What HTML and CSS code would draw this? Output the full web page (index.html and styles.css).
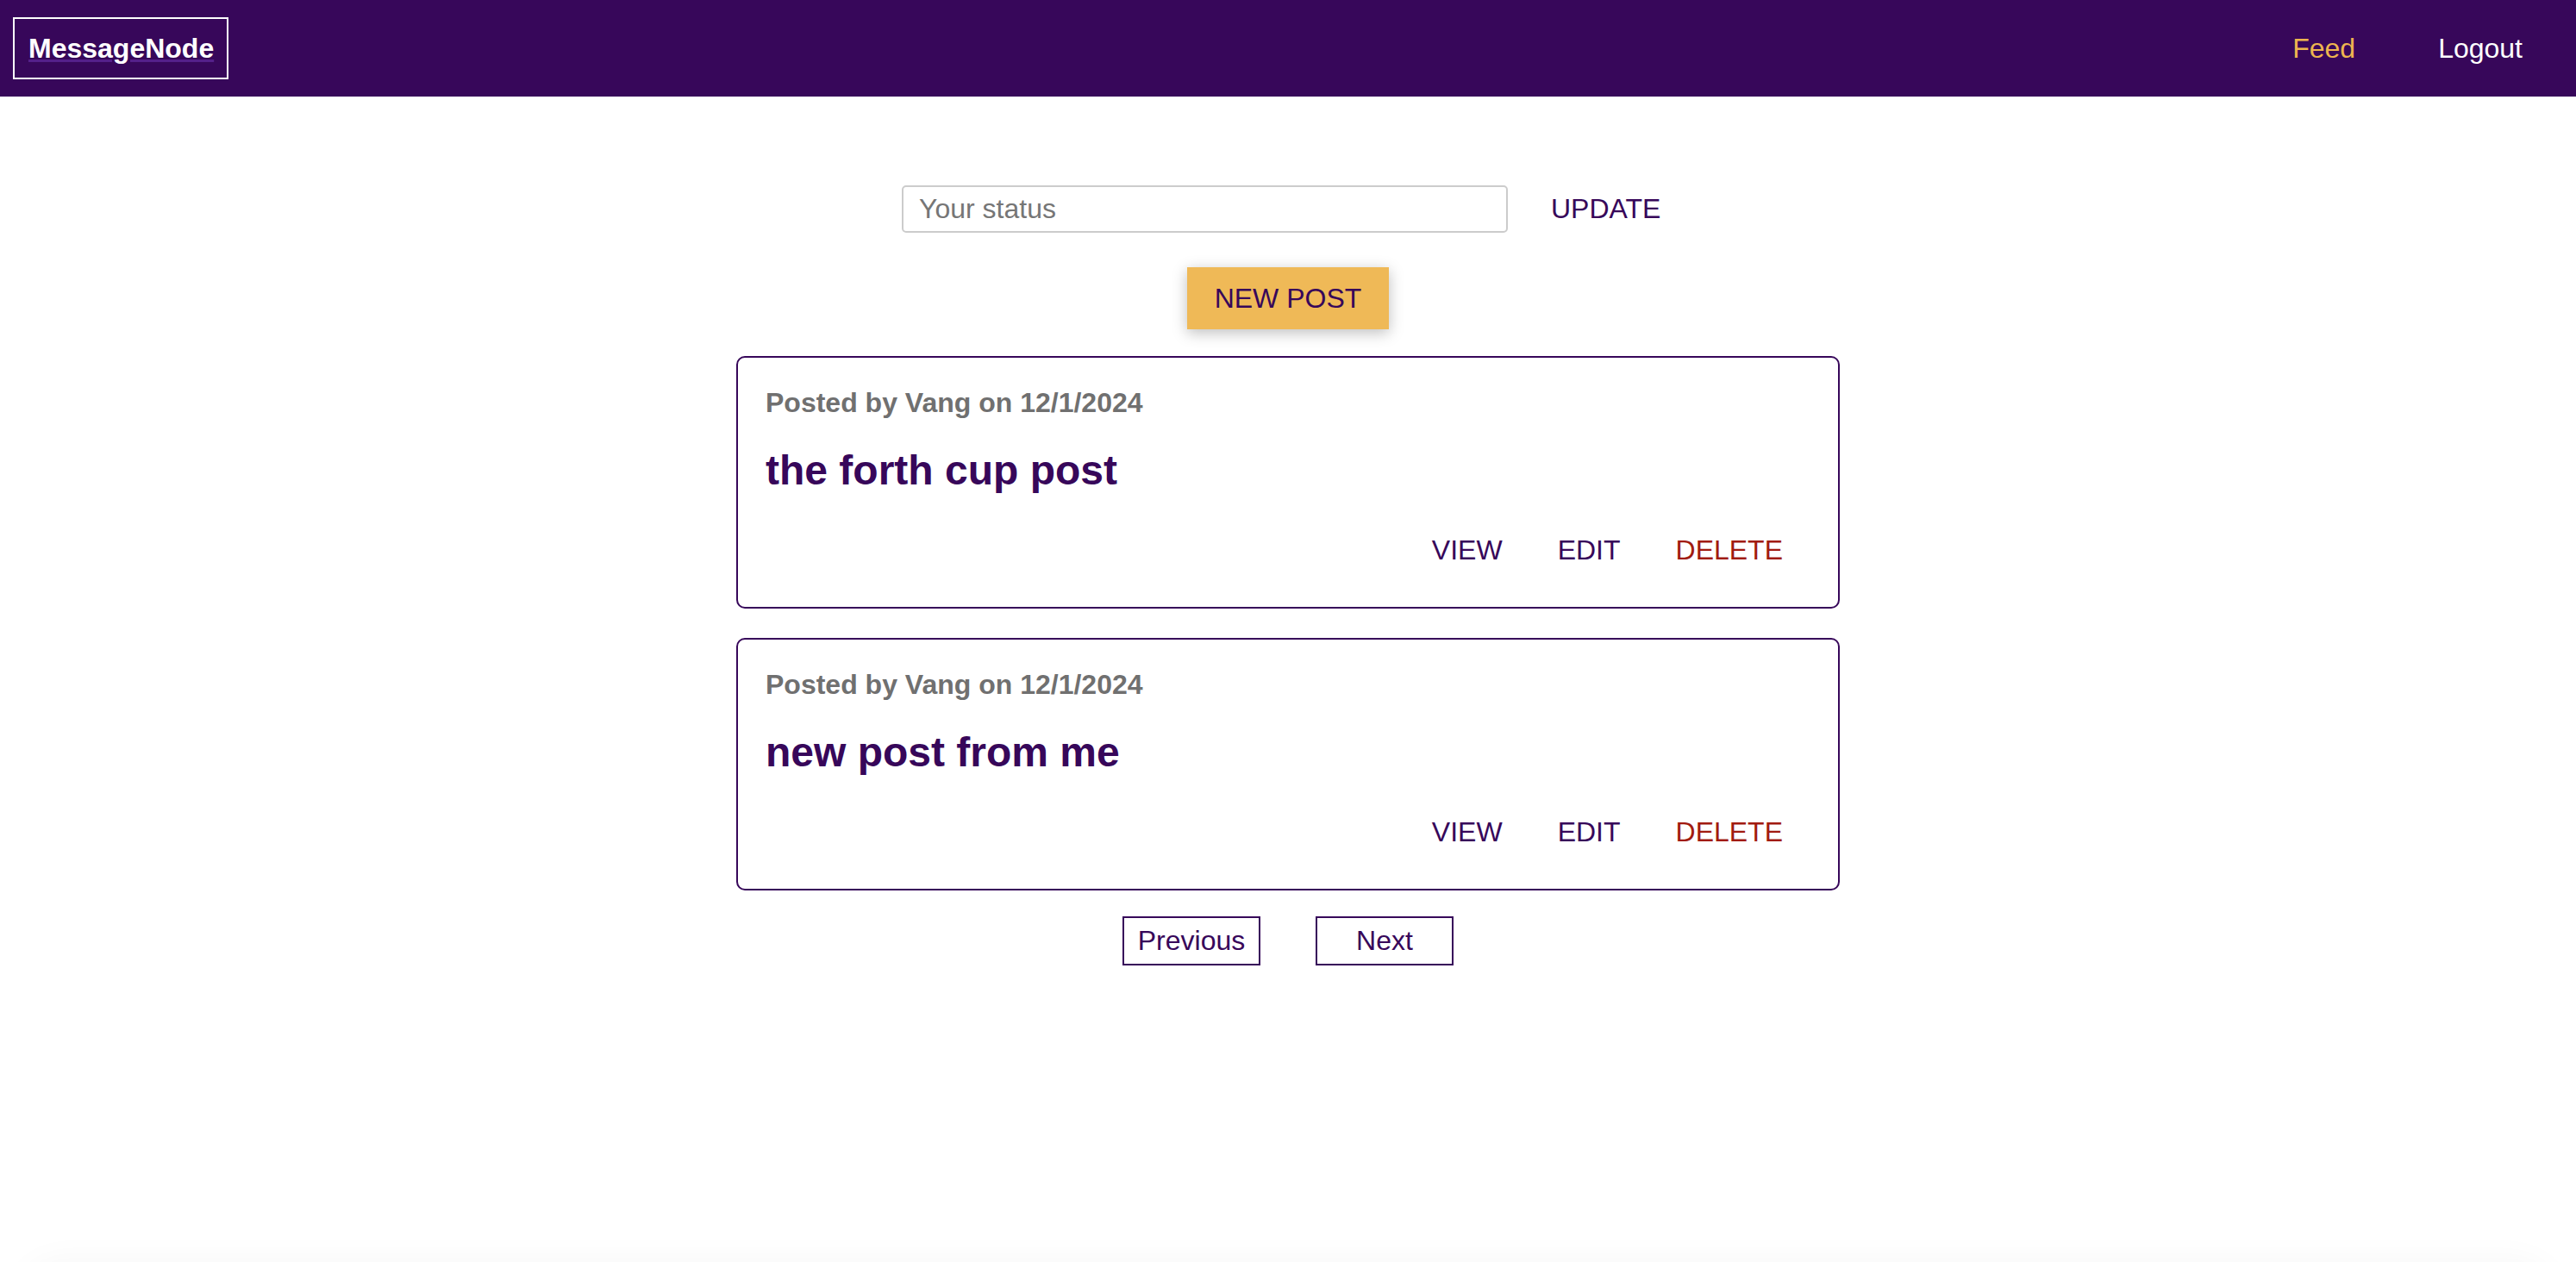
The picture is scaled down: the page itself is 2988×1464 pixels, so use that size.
FILE: index.html
```html
<!DOCTYPE html>
<html lang="en">
<head>
<meta charset="utf-8">
<title>MessageNode</title>
<link rel="stylesheet" href="styles.css">
</head>
<body>
<header class="main-header">
  <a class="logo">MessageNode</a>
  <nav class="nav">
    <a class="nav-item active">Feed</a>
    <a class="nav-item">Logout</a>
  </nav>
</header>
<main class="feed">
  <section class="status">
    <input class="status-input" type="text" placeholder="Your status">
    <button class="btn-flat">UPDATE</button>
  </section>
  <section class="new-post">
    <button class="btn-raised">NEW POST</button>
  </section>
  <section class="posts">
    <article class="post">
      <p class="post-meta">Posted by Vang on 12/1/2024</p>
      <h1 class="post-title">the forth cup post</h1>
      <div class="post-actions">
        <button class="btn-flat">VIEW</button>
        <button class="btn-flat">EDIT</button>
        <button class="btn-flat danger">DELETE</button>
      </div>
    </article>
    <article class="post">
      <p class="post-meta">Posted by Vang on 12/1/2024</p>
      <h1 class="post-title">new post from me</h1>
      <div class="post-actions">
        <button class="btn-flat">VIEW</button>
        <button class="btn-flat">EDIT</button>
        <button class="btn-flat danger">DELETE</button>
      </div>
    </article>
  </section>
  <div class="paginator">
    <button class="page-btn">Previous</button>
    <button class="page-btn">Next</button>
  </div>
</main>
<div class="bottom-sheet"></div>
</body>
</html>
```

FILE: styles.css
```css
* { box-sizing: border-box; }
html, body {
  margin: 0;
  padding: 0;
  background: #ffffff;
  font-family: "Liberation Sans", Arial, Helvetica, sans-serif;
}
.main-header {
  height: 112px;
  background: #37075a;
  display: flex;
  align-items: center;
  justify-content: space-between;
  padding: 0 14px 0 15px;
}
.logo {
  display: block;
  color: #ffffff;
  font-size: 32px;
  font-weight: bold;
  line-height: 37px;
  border: 2px solid #ffffff;
  padding: 16px 15px 15px 16px;
  text-decoration: underline;
  text-decoration-color: #54208a;
  text-decoration-thickness: 3px;
  text-underline-offset: 2px;
  width: 250px;
  height: 72px;
}
.nav { display: flex; }
.nav-item {
  color: #ffffff;
  font-size: 32px;
  line-height: 37px;
  padding: 0 48px;
}
.nav-item.active { color: #eeb54f; }

.feed {
  padding-top: 103px;
  padding-bottom: 40px;
}
.status {
  width: 960px;
  margin: 0 auto;
  padding-left: 32px;
  display: flex;
  align-items: center;
}
.status-input {
  width: 703px;
  height: 55px;
  border: 2px solid #cccccc;
  border-radius: 5px;
  padding: 0 18px;
  font: inherit;
  font-size: 32px;
  color: #333;
  outline: none;
}
.status-input::placeholder { color: #767676; }
.btn-flat {
  font: inherit;
  font-size: 32px;
  line-height: 37px;
  background: transparent;
  border: none;
  color: #37075a;
  padding: 15px 32px;
  cursor: pointer;
}
.status .btn-flat { margin-left: 18px; padding: 0 32px; }
.btn-flat.danger { color: #a11b10; }

.new-post {
  display: flex;
  justify-content: center;
  margin-top: 40px;
}
.btn-raised {
  font: inherit;
  font-size: 32px;
  line-height: 38px;
  background: #efb957;
  color: #37075a;
  border: none;
  padding: 17px 32px;
  box-shadow: 0 4px 16px rgba(0, 0, 0, 0.26);
}

.posts {
  width: 1280px;
  margin: 31px auto 0;
  display: flex;
  flex-direction: column;
  gap: 34px;
}
.post {
  border: 2px solid #37075a;
  border-radius: 10px;
  padding: 34px 32px 32px 32px;
}
.post-meta {
  margin: 0;
  font-size: 32px;
  line-height: 37px;
  font-weight: bold;
  color: #707070;
}
.post-title {
  margin: 32px 0;
  font-size: 48px;
  line-height: 55px;
  font-weight: bold;
  color: #37075a;
}
.post-actions {
  display: flex;
  justify-content: flex-end;
  margin-right: 0;
}

.paginator {
  display: flex;
  justify-content: center;
  gap: 64px;
  margin-top: 30px;
}
.page-btn {
  font: inherit;
  font-size: 32px;
  line-height: 37px;
  width: 160px;
  padding: 8px 0;
  border: 2px solid #37075a;
  background: #ffffff;
  color: #37075a;
  text-align: center;
}

.bottom-sheet {
  position: fixed;
  top: 100%;
  left: 28px;
  right: 28px;
  height: 200px;
  border-radius: 40px;
  background: #ffffff;
  box-shadow: 0 0 40px rgba(0, 0, 0, 0.04);
}
```
